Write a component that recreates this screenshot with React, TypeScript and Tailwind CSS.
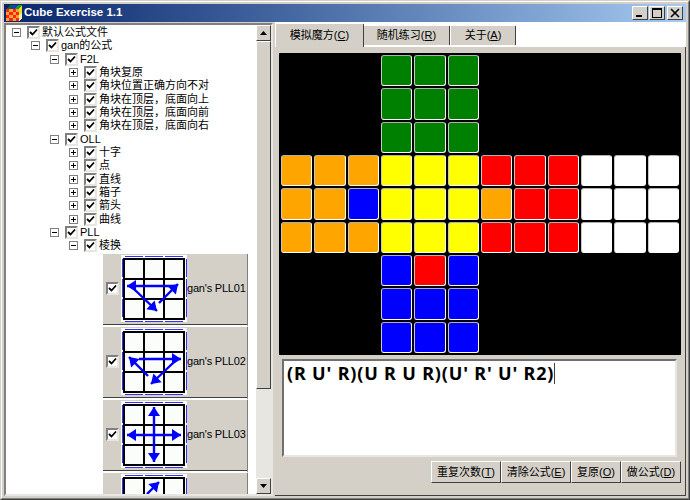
const FACE = {
  G: "bg-[#008000]",
  O: "bg-[#ffa500]",
  Y: "bg-[#ffff00]",
  R: "bg-[#ff0000]",
  W: "bg-[#ffffff]",
  B: "bg-[#0000ff]",
  _: "",
} as const;

const CUBE = [
  "___GGG______",
  "___GGG______",
  "___GGG______",
  "OOOYYYRRRWWW",
  "OOBYYYORRWWW",
  "OOOYYYRRRWWW",
  "___BRB______",
  "___BBB______",
  "___BBB______",
];

const TREE: { level: number; label: string; open: boolean }[] = [
  { level: 0, label: "默认公式文件", open: true },
  { level: 1, label: "gan的公式", open: true },
  { level: 2, label: "F2L", open: true },
  { level: 3, label: "角块复原", open: false },
  { level: 3, label: "角块位置正确方向不对", open: false },
  { level: 3, label: "角块在顶层，底面向上", open: false },
  { level: 3, label: "角块在顶层，底面向前", open: false },
  { level: 3, label: "角块在顶层，底面向右", open: false },
  { level: 2, label: "OLL", open: true },
  { level: 3, label: "十字", open: false },
  { level: 3, label: "点", open: false },
  { level: 3, label: "直线", open: false },
  { level: 3, label: "箱子", open: false },
  { level: 3, label: "箭头", open: false },
  { level: 3, label: "曲线", open: false },
  { level: 2, label: "PLL", open: true },
  { level: 3, label: "棱换", open: true },
];

type Arrow = { from: [number, number]; to: [number, number]; both?: boolean };

// the fourth item is scrolled past the bottom edge, only its thumbnail shows
const PLL: { id: string; label?: string; arrows: Arrow[] }[] = [
  {
    id: "01",
    label: "gan's PLL01",
    arrows: [
      { from: [54, 31], to: [6, 31] },
      { from: [38, 48], to: [57, 29] },
      { from: [14, 35], to: [36, 56] },
    ],
  },
  {
    id: "02",
    label: "gan's PLL02",
    arrows: [
      { from: [18, 31], to: [60, 31] },
      { from: [52, 35], to: [30, 56] },
      { from: [27, 48], to: [8, 29] },
    ],
  },
  {
    id: "03",
    label: "gan's PLL03",
    arrows: [
      { from: [6, 34], to: [60, 34], both: true },
      { from: [33, 6], to: [33, 61], both: true },
    ],
  },
  { id: "04", arrows: [{ from: [26, 20], to: [38, 8] }] },
];

function Head({ from, to }: { from: [number, number]; to: [number, number] }) {
  const a = Math.atan2(to[1] - from[1], to[0] - from[0]);
  const pt = (d: number, s: number) =>
    `${to[0] - d * Math.cos(a) - s * Math.sin(a)},${to[1] - d * Math.sin(a) + s * Math.cos(a)}`;
  return <polygon points={`${to[0]},${to[1]} ${pt(9, 6)} ${pt(9, -6)}`} fill="#0000ff" />;
}

function Thumb({ arrows }: { arrows: Arrow[] }) {
  const cuts = [4, 24, 44];
  return (
    <svg width="66" height="67" viewBox="0 0 66 67" className="block shrink-0 bg-[#ffffff]">
      {cuts.map((c) => (
        <g key={c} fill="#3333ff" shapeRendering="crispEdges">
          <rect x={c} y="1" width="18" height="1" />
          <rect x={c} y="66" width="18" height="1" />
          <rect x="1" y={c} width="1" height="18" />
          <rect x="65" y={c} width="1" height="18" />
        </g>
      ))}
      <rect x="3" y="4" width="60" height="60" fill="#fbfdfb" stroke="#000" strokeWidth="2" shapeRendering="crispEdges" />
      <g stroke="#000" strokeWidth="2" shapeRendering="crispEdges">
        <line x1="23" y1="4" x2="23" y2="64" />
        <line x1="43" y1="4" x2="43" y2="64" />
        <line x1="3" y1="24" x2="63" y2="24" />
        <line x1="3" y1="44" x2="63" y2="44" />
      </g>
      {arrows.map((r, i) => (
        <g key={i}>
          <line x1={r.from[0]} y1={r.from[1]} x2={r.to[0]} y2={r.to[1]} stroke="#0000ff" strokeWidth="2.4" />
          <Head from={r.from} to={r.to} />
          {r.both && <Head from={r.to} to={r.from} />}
        </g>
      ))}
    </svg>
  );
}

function Check() {
  return (
    <span className="block w-[13px] h-[13px] shrink-0 bg-white border-2 border-t-[#808080] border-l-[#808080] border-r-[#e8e6e1] border-b-[#e8e6e1]">
      <svg width="9" height="9" viewBox="0 0 9 9" className="block">
        <path d="M1 4l2.5 2.5L8 1.5" fill="none" stroke="#000" strokeWidth="1.8" />
      </svg>
    </span>
  );
}

function Expander({ open }: { open: boolean }) {
  return (
    <svg width="9" height="9" viewBox="0 0 9 9" className="block shrink-0" shapeRendering="crispEdges">
      <rect x="0.5" y="0.5" width="8" height="8" fill="#fff" stroke="#808080" />
      <rect x="2" y="4" width="5" height="1" fill="#000" />
      {!open && <rect x="4" y="2" width="1" height="5" fill="#000" />}
    </svg>
  );
}

function ScrollArrow({ down }: { down?: boolean }) {
  return (
    <div className="h-[16px] shrink-0 bg-[#d4d0c8] border border-t-white border-l-white border-r-[#404040] border-b-[#404040] flex items-center justify-center">
      <svg width="7" height="4" viewBox="0 0 7 4" className="block">
        <polygon points={down ? "0,0 7,0 3.5,4" : "3.5,0 7,4 0,4"} fill="#000" />
      </svg>
    </div>
  );
}

function WinButton({ kind }: { kind: "min" | "max" | "close" }) {
  return (
    <div className="w-[16px] h-[14px] bg-[#d4d0c8] border border-t-white border-l-white border-r-[#404040] border-b-[#404040] flex items-center justify-center">
      <svg width="10" height="10" viewBox="0 0 10 10" className="block" shapeRendering="crispEdges">
        {kind === "min" && <rect x="1" y="7" width="6" height="2" fill="#000" />}
        {kind === "max" && (
          <>
            <rect x="0.5" y="0.5" width="9" height="8.5" fill="none" stroke="#000" />
            <rect x="0" y="1" width="10" height="1" fill="#000" />
          </>
        )}
        {kind === "close" && (
          <path d="M1 1l8 8M9 1l-8 8" stroke="#000" strokeWidth="1.6" shapeRendering="auto" />
        )}
      </svg>
    </div>
  );
}

function Logo() {
  const cells = Array.from({ length: 16 }, (_, i) => i);
  return (
    <svg width="16" height="16" viewBox="0 0 16 16" className="shrink-0" shapeRendering="crispEdges">
      <polygon points="4,0 8,0 5,4 0,4" fill="#006a30" />
      <polygon points="8,0 12,0 9,4 5,4" fill="#2038c0" />
      <polygon points="12,0 16,0 13,4 9,4" fill="#10a020" />
      <polygon points="13,4 16,0 16,7 13,10" fill="#e8e020" />
      <polygon points="13,10 16,7 16,13 13,16" fill="#f0f0b0" />
      {cells.map((i) => (
        <rect
          key={i}
          x={(i % 4) * 3.25}
          y={Math.floor(i / 4) * 3 + 4}
          width="3.25"
          height="3"
          fill={(i + Math.floor(i / 4)) % 2 === 0 ? "#ff2800" : "#ffa040"}
        />
      ))}
    </svg>
  );
}

function Key({ label, k }: { label: string; k: string }) {
  return (
    <>
      {label}(<u>{k}</u>)
    </>
  );
}

function Btn({ w, label, k }: { w: string; label: string; k: string }) {
  return (
    <div
      className={`${w} h-[22px] flex items-center justify-center bg-[#d4d0c8] border border-t-white border-l-white border-r-[#404040] border-b-[#404040]`}
    >
      <span>
        <Key label={label} k={k} />
      </span>
    </div>
  );
}

export default function App() {
  return (
    <div className="w-[690px] h-[500px] overflow-hidden bg-[#d4d0c8] border border-t-[#d4d0c8] border-l-[#d4d0c8] border-r-[#404040] border-b-[#404040] text-[11px] leading-none text-black font-['Liberation_Sans','Noto_Sans_CJK_SC',sans-serif]">
      <div className="h-full border border-t-white border-l-white border-r-[#808080] border-b-[#808080] p-[2px] flex flex-col">
        {/* title bar */}
        <div className="h-[18px] shrink-0 flex items-center pl-[2px] pr-[3px] gap-[2px] bg-gradient-to-r from-[#0a246a] to-[#a6caf0]">
          <Logo />
          <span className="text-white font-bold text-[11.5px]">Cube Exercise 1.1</span>
          <div className="ml-auto flex">
            <WinButton kind="min" />
            <div className="w-[16px] ml-[1px]">
              <WinButton kind="max" />
            </div>
            <div className="w-[16px] ml-[2px]">
              <WinButton kind="close" />
            </div>
          </div>
        </div>

        <div className="flex flex-1 min-h-0">
          {/* tree */}
          <div className="w-[269px] shrink-0 mt-[1px] flex bg-white border-2 border-t-[#808080] border-l-[#808080] border-r-[#e8e6e1] border-b-[#e8e6e1] overflow-hidden">
            <div className="w-[250px] shrink-0 overflow-hidden">
              <div className="h-[1px]" />
              {TREE.map((n) => (
                <div
                  key={n.label}
                  className={`h-[13.33px] flex items-center ${
                    ["ml-[6px]", "ml-[25px]", "ml-[44px]", "ml-[63px]"][n.level]
                  }`}
                >
                  <Expander open={n.open} />
                  <span className="ml-[6px]">
                    <Check />
                  </span>
                  <span className="ml-[2px] whitespace-nowrap">{n.label}</span>
                </div>
              ))}
              <div className="ml-[97px] w-[145px] mt-[1px]">
                {PLL.map((p) => (
                  <div
                    key={p.id}
                    className="h-[73px] flex items-center pl-[3px] pb-[2px] bg-[#d4d0c8] border-b-2 border-b-white border-r border-r-[#808080] shadow-[inset_0_-1px_0_#404040] whitespace-nowrap"
                  >
                    <Check />
                    <span className="ml-[2px] self-start mt-[1px]">
                      <Thumb arrows={p.arrows} />
                    </span>
                    {p.label && <span className="tracking-[-0.2px]">{p.label}</span>}
                  </div>
                ))}
              </div>
            </div>
            <div className="w-[15px] ml-auto flex flex-col bg-[#e8e6e1]">
              <ScrollArrow />
              <div className="h-[348px] shrink-0 bg-[#d4d0c8] border border-t-white border-l-white border-r-[#404040] border-b-[#404040]" />
              <div className="flex-1" />
              <ScrollArrow down />
            </div>
          </div>

          {/* tabs */}
          <div className="flex-1 min-w-0 ml-[2px] flex flex-col">
            <div className="h-[25px] shrink-0 flex bg-white">
              <div className="w-[89px] mt-[1px] h-[24px] flex items-center justify-center bg-[#d4d0c8] border-t border-l border-t-white border-l-white border-r border-r-[#404040] rounded-t-[2px]">
                <Key label="模拟魔方" k="C" />
              </div>
              <div className="w-[86px] mt-[4px] h-[19px] flex items-center justify-center bg-[#d4d0c8] border-r border-r-[#404040]">
                <Key label="随机练习" k="R" />
              </div>
              <div className="w-[65px] mt-[4px] ml-[1px] h-[19px] flex items-center justify-center bg-[#d4d0c8] border-r border-r-[#404040]">
                <Key label="关于" k="A" />
              </div>
            </div>

            <div className="flex-1 min-h-0 flex flex-col pt-[6px] pl-[4px] pr-[4px] border-r border-r-[#404040] border-b border-b-[#404040] bg-[#d4d0c8]">
              <div className="w-[402px] h-[302px] shrink-0 bg-black p-[1px]">
                <div className="w-[400px] h-[300px] grid grid-cols-12 grid-rows-9">
                  {CUBE.flatMap((row, y) =>
                    row.split("").map((c, x) =>
                      c === "_" ? (
                        <div key={`${x}-${y}`} />
                      ) : (
                        <div
                          key={`${x}-${y}`}
                          className={`m-[1px] rounded-[3px] border border-t-[#b0b0b0] border-l-[#c8c8c8] border-r-white border-b-white ${
                            FACE[c as keyof typeof FACE]
                          }`}
                        />
                      ),
                    ),
                  )}
                </div>
              </div>

              <div className="ml-[3px] mt-[4px] w-[395px] h-[98px] shrink-0 bg-white border-2 border-t-[#707070] border-l-[#707070] border-r-[#e8e6e1] border-b-[#e8e6e1] pl-[3px] pt-[2px]">
                <span className="inline-block h-[21px] leading-[21px] border-r border-r-[#404040] font-bold text-[18px] tracking-[0.83px] whitespace-nowrap font-['Noto_Sans',sans-serif]">
                  (R U' R)(U R U R)(U' R' U' R2)
                </span>
              </div>

              <div className="mt-[4px] flex justify-end">
                <Btn w="w-[70px]" label="重复次数" k="T" />
                <Btn w="w-[70px]" label="清除公式" k="E" />
                <Btn w="w-[50px]" label="复原" k="O" />
                <Btn w="w-[60px]" label="做公式" k="D" />
              </div>
            </div>
          </div>
        </div>
      </div>
    </div>
  );
}
